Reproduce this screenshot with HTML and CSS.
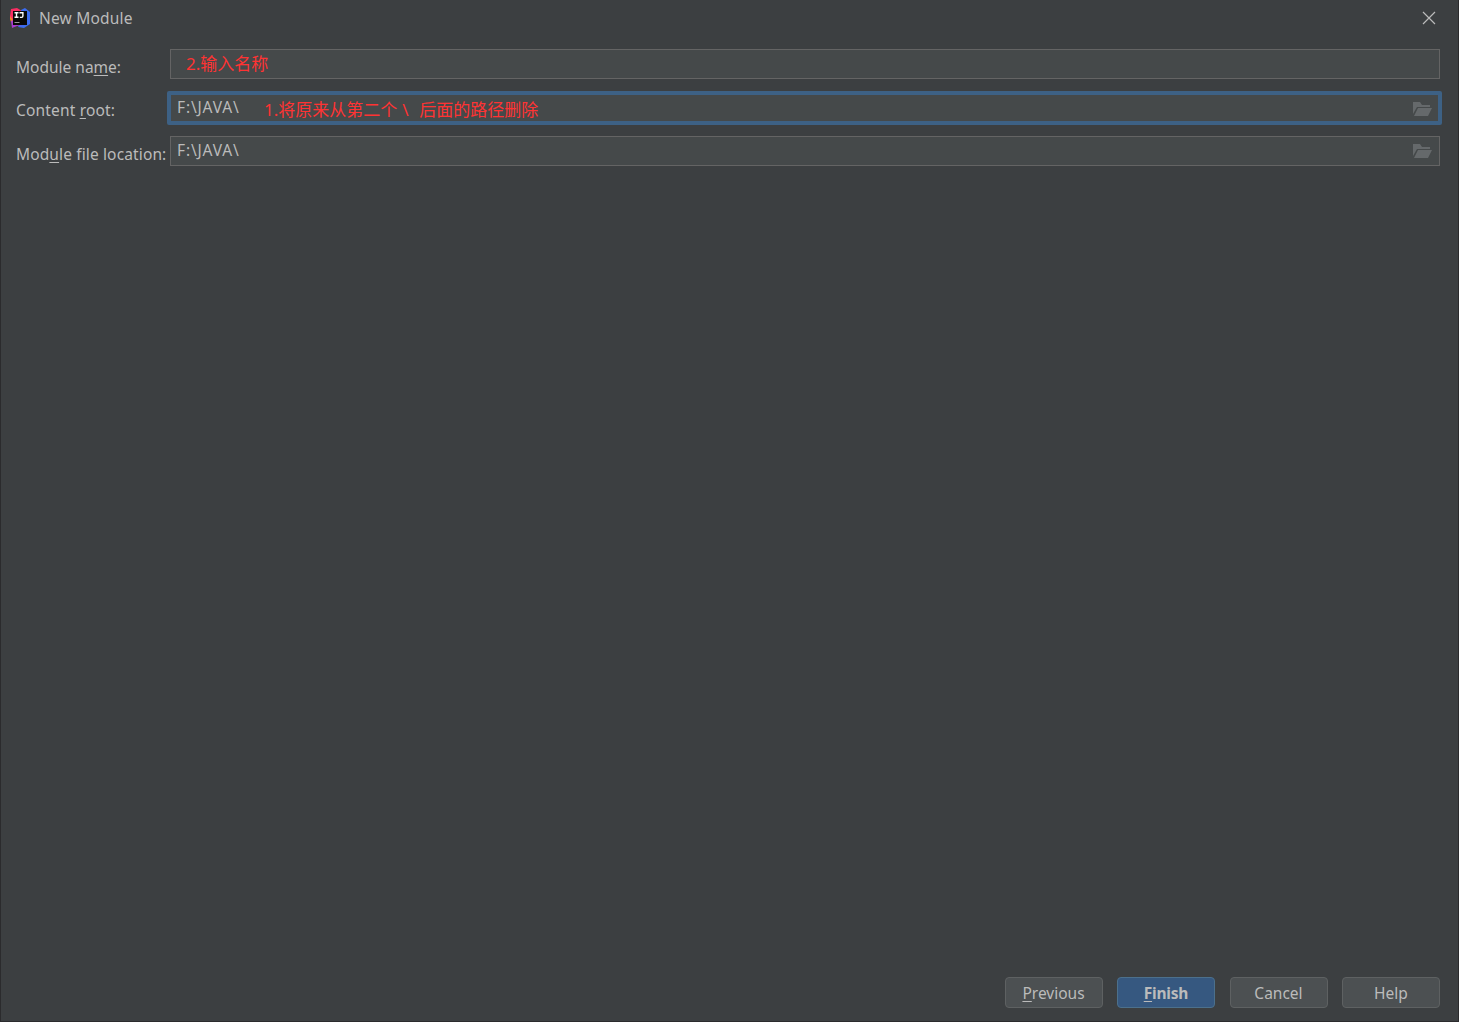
FILE: index.html
```html
<!DOCTYPE html>
<html lang="en">
<head>
    <meta charset="UTF-8">
    <meta name="viewport" content="width=device-width, initial-scale=1.0">
    <title>New Module</title>
    <link rel="stylesheet" href="styles.css">
</head>
<body>
    <div class="dialog">
        <header class="title-bar">
            <svg class="logo" width="22" height="22" viewBox="0 0 22 22">
                <path fill="#f58529" d="M1 9l5-1v8l-4-1-1-3z"/>
                <path fill="#fb2d63" d="M2 2l6-1 5 3-1 6-8 3-3-4z"/>
                <path fill="#3b6cf0" d="M12 3l4-2 5 4v12l-6 4-6-1 3-6z"/>
                <path fill="#a83bd0" d="M2 14l5-2 6 6-5 1-5 2z"/>
                <rect x="4" y="4" width="14" height="14" fill="#080808"/>
                <path fill="none" stroke="#fff" stroke-width="1.4" d="M5.5 5.7h4M7.5 5.7v5M5.5 10.3h4M10.5 5.7h3.4v3.4q0 1.3-1.3 1.3h-1.8"/>
                <path fill="#999" d="M5.5 15h5v1h-5z"/>
            </svg>
            <span class="title">New Module</span>
            <svg class="close" width="14" height="14" viewBox="0 0 14 14">
                <path d="M1 1l12 12M13 1L1 13"/>
            </svg>
        </header>

        <form class="module-form">
            <label class="name-label">Module na<u>m</u>e:</label>
            <div class="field">
                <span class="note note-name">2.输入名称</span>
            </div>

            <label class="root-label">Content <u>r</u>oot:</label>
            <div class="field focused">
                <span class="path">F:\JAVA\</span>
                <span class="note note-root">1.将原来从第二个<span class="slash">\</span>后面的路径删除</span>
                <svg class="folder" width="20" height="16" viewBox="0 0 20 16">
                    <path d="M0 1h7l2 3h8v2H4L0 13z"/>
                    <path d="M5 7h14l-4 8H1z"/>
                </svg>
            </div>

            <label class="location-label">Mod<u>u</u>le file location:</label>
            <div class="field">
                <span class="path">F:\JAVA\</span>
                <svg class="folder" width="20" height="16" viewBox="0 0 20 16">
                    <path d="M0 1h7l2 3h8v2H4L0 13z"/>
                    <path d="M5 7h14l-4 8H1z"/>
                </svg>
            </div>
        </form>

        <footer class="buttons">
            <button type="button"><u>P</u>revious</button>
            <button type="button" class="primary"><u>F</u>inish</button>
            <button type="button">Cancel</button>
            <button type="button">Help</button>
        </footer>
    </div>
</body>
</html>
```
FILE: styles.css
```css
* {
    box-sizing: border-box;
}
body {
    margin: 0;
    overflow: hidden;
    background: #3c3f41;
    color: #bbbbbb;
    font-family: "Noto Sans", "Noto Sans CJK SC", sans-serif;
    font-size: 15.5px;
}
.dialog {
    display: flex;
    flex-direction: column;
    height: 1022px;
    border: 1px solid #2b2b2d;
    border-top: none;
}
.title-bar {
    display: flex;
    align-items: center;
    height: 36px;
    padding: 0 22px 0 8px;
}
.title {
    margin-left: 8px;
    flex: 1;
    letter-spacing: 0.2px;
}
.close {
    fill: none;
    stroke: #bbbbbb;
    stroke-width: 1.2;
}
.module-form {
    display: grid;
    grid-template-columns: 154px 1270px;
    grid-template-rows: 30px 34px 30px;
    row-gap: 12px;
    padding: 13px 0 0 15px;
}
label {
    line-height: 22px;
    padding-top: 7px;
    white-space: nowrap;
}
.root-label {
    padding-top: 8px;
    letter-spacing: 0.17px;
}
.location-label {
    padding-top: 6px;
    letter-spacing: 0.13px;
}
u {
    text-decoration-thickness: 1px;
    text-underline-offset: 2px;
    text-decoration-skip-ink: none;
}
.field {
    display: flex;
    align-items: center;
    height: 30px;
    border: 1px solid #646464;
    background: #45494a;
    padding: 0 6px;
}
.focused {
    height: 34px;
    margin: 0 -2px 0 -3px;
    border: 4px solid #3d6185;
    border-radius: 2px;
    padding: 0 5px 0 6px;
}
.location-label,
.location-label + .field {
    margin-top: -1px;
}
.location-label {
    padding-top: 7px;
}
.path {
    width: 63px;
    line-height: 20px;
    padding-bottom: 2px;
    letter-spacing: 0.85px;
}
.note {
    color: #ff3333;
    font-size: 17px;
    line-height: 22px;
    white-space: nowrap;
}
.note-name {
    margin-left: 9px;
}
.note-root {
    margin-left: 24px;
    padding-top: 3px;
}
.slash {
    display: inline-block;
    width: 22px;
    padding-left: 5px;
}
.folder {
    margin-left: auto;
    fill: #65696b;
}
.focused .folder {
    margin-top: 1px;
}
.buttons {
    display: flex;
    justify-content: flex-end;
    gap: 14.5px;
    margin-top: auto;
    padding: 0 18px 13px 0;
}
button {
    width: 98px;
    height: 31px;
    padding: 0;
    border: 1px solid #5e6162;
    border-radius: 4px;
    background: #4c5052;
    color: #bbbbbb;
    font: inherit;
}
.primary {
    border-color: #4c708c;
    background: #365880;
    font-weight: bold;
    letter-spacing: -0.2px;
}
```
